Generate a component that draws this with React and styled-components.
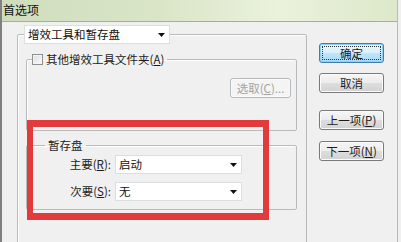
import React from 'react';
import styled, { createGlobalStyle } from 'styled-components';

const GlobalStyle = createGlobalStyle`
    html, body {
        margin: 0;
        padding: 0;
        background: #f0f0f0;
    }
    body {
        font-family: "Noto Sans CJK SC", "Liberation Sans", sans-serif;
        font-size: 11.5px;
        color: #1c1c1c;
    }
`;

const Arrow = () => (
    <svg width="7" height="4" viewBox="0 0 7 4">
        <path d="M0 0 H7 L3.5 4 Z" fill="#111" />
    </svg>
);

const Select = ({ value, width }) => (
    <SelectBox width={width}>
        <span>{value}</span>
        <Arrow />
    </SelectBox>
);

export default function App() {
    return (
        <Window>
            <GlobalStyle />
            <TitleBar>首选项</TitleBar>
            <Body>
                <OuterGroup>
                    <OuterLegend>
                        <Select value="增效工具和暂存盘" width={146} />
                    </OuterLegend>

                    <Group gap={8}>
                        <CheckLegend>
                            <Checkbox />
                            <span>其他增效工具文件夹(<u>A</u>)</span>
                        </CheckLegend>
                        <PickRow>
                            <Button disabled width={61}>选取(<u>C</u>)...</Button>
                        </PickRow>
                    </Group>

                    <Group gap={7}>
                        <TextLegend>暂存盘</TextLegend>
                        <DiskGrid>
                            <FieldLabel>主要(<u>R</u>):</FieldLabel>
                            <Select value="启动" />
                            <FieldLabel>次要(<u>S</u>):</FieldLabel>
                            <Select value="无" />
                        </DiskGrid>
                    </Group>
                </OuterGroup>

                <ButtonColumn>
                    <Button primary>确定</Button>
                    <Button space={10}>取消</Button>
                    <Button space={17}>上一项(<u>P</u>)</Button>
                    <Button space={11}>下一项(<u>N</u>)</Button>
                </ButtonColumn>
            </Body>
            <Highlight />
        </Window>
    );
}

const Window = styled.div`
    position: relative;
    width: 398px;
    height: 242px;
    overflow: hidden;
    box-sizing: border-box;
    background: #f0f0f0;
    border-left: 2px solid #808080;
    border-right: 1px solid #b9b9b9;
`;

const TitleBar = styled.div`
    height: 21px;
    line-height: 20px;
    padding-left: 1px;
    font-size: 12px;
    color: #111;
    background: linear-gradient(90deg, #cfddbd 0%, #dae5c8 40%, #eaf2dc 70%, #dde8ca 100%);
    border-bottom: 1px solid #a3b096;
`;

const Body = styled.div`
    display: flex;
    align-items: flex-start;
    padding-left: 15px;
`;

const OuterGroup = styled.fieldset`
    margin: 3px 0 0 0;
    padding: 0;
    min-width: 0;
    width: 290px;
    height: 240px;
    box-sizing: border-box;
    border: 1px solid #b7bbbe;
    border-radius: 2px;
    box-shadow: inset 1px 1px 0 #fff;
`;

const OuterLegend = styled.legend`
    margin-left: 6px;
    padding: 0;
    line-height: 0;
`;

const SelectBox = styled.div`
    display: flex;
    align-items: center;
    justify-content: space-between;
    box-sizing: border-box;
    width: ${props => (props.width ? `${props.width}px` : '127px')};
    height: 19px;
    padding: 0 4px 0 3px;
    background: #fff;
    border: 1px solid #dcdfe2;
    font-size: 11.5px;
    line-height: 17px;
    color: #111;
`;

const Group = styled.fieldset`
    margin: ${props => props.gap}px 9px 0 8px;
    padding: 0;
    min-width: 0;
    border: 1px solid #b7bbbe;
    border-radius: 2px;
    box-shadow: inset 1px 1px 0 #fff;
`;

const CheckLegend = styled.legend`
    display: flex;
    align-items: center;
    gap: 3px;
    margin-left: 5px;
    padding: 0 3px 0 0;
    line-height: 14px;
`;

const Checkbox = styled.span`
    display: inline-block;
    width: 11px;
    height: 11px;
    box-sizing: border-box;
    border: 1px solid #8e8f8f;
    background: linear-gradient(135deg, #dcdcdc, #fbfbfb);
    box-shadow: inset 0 0 0 1px #f4f4f4;
`;

const TextLegend = styled.legend`
    margin-left: 18px;
    padding: 0 3px;
    line-height: 14px;
`;

const PickRow = styled.div`
    display: flex;
    justify-content: flex-end;
    padding: 12px 5px 32px 0;
`;

const DiskGrid = styled.div`
    display: grid;
    grid-template-columns: 84px 127px;
    column-gap: 4px;
    row-gap: 8px;
    align-items: center;
    padding: 3px 0 8px 0;
`;

const FieldLabel = styled.span`
    text-align: right;
    line-height: 19px;
`;

const ButtonColumn = styled.div`
    display: flex;
    flex-direction: column;
    margin: 21px 0 0 12px;
`;

const Button = styled.button`
    box-sizing: border-box;
    width: ${props => (props.width ? `${props.width}px` : '65px')};
    height: 20px;
    margin: ${props => (props.space ? `${props.space}px` : '0')} 0 0 0;
    padding: 0;
    font-family: inherit;
    font-size: 11.5px;
    line-height: 16px;
    color: ${props => (props.disabled ? '#a3a3a3' : '#1c1c1c')};
    border-radius: 3px;
    border: 1px solid ${props =>
        props.primary ? '#3c7fb1' : props.disabled ? '#b5b9bc' : '#7a7a7a'};
    background: ${props =>
        props.primary
            ? 'linear-gradient(#eaf6fd 0%, #d9f0fc 49%, #bee6fd 50%, #a7d9f5 100%)'
            : props.disabled
            ? '#f4f4f4'
            : 'linear-gradient(#f6f6f6 0%, #ececec 49%, #dedede 50%, #d2d2d2 100%)'};
    box-shadow: ${props =>
        props.primary ? 'inset 0 0 0 1px #8fd0f0' : 'inset 0 0 0 1px #fbfbfb'};
    outline: ${props => (props.primary ? '1px dotted #333' : 'none')};
    outline-offset: -4px;

    u {
        text-decoration: underline;
    }
`;

const Highlight = styled.div`
    position: absolute;
    left: 25px;
    top: 120px;
    width: 242px;
    height: 100px;
    box-sizing: border-box;
    border: 6px solid #e23b3d;
    border-top-width: 7px;
    border-bottom-width: 7px;
    pointer-events: none;
`;
